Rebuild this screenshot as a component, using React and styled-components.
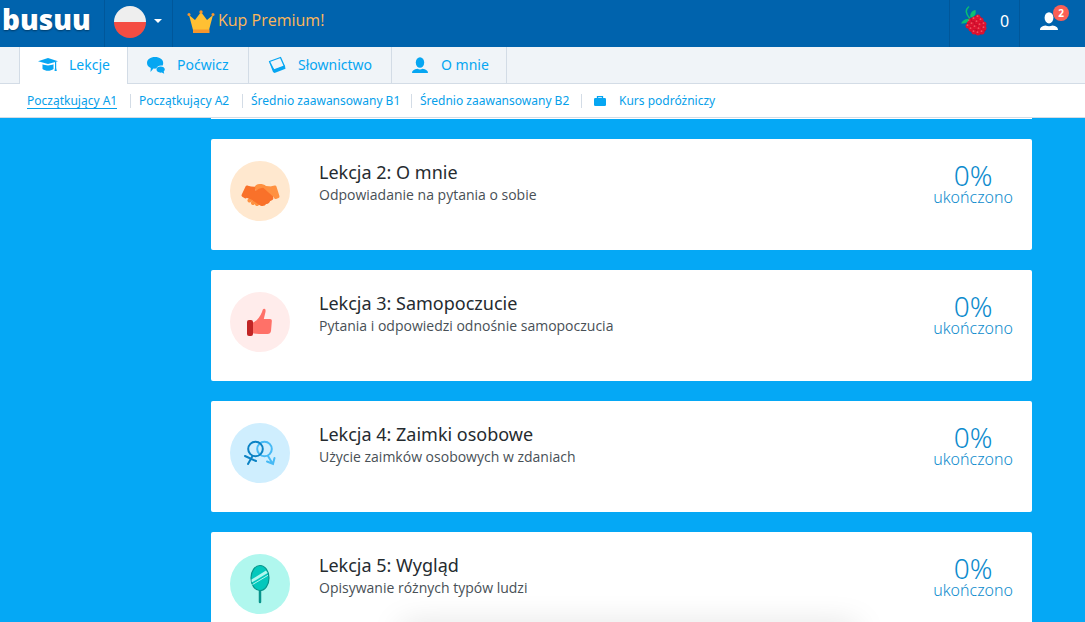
import React from 'react';
import styled, { createGlobalStyle } from 'styled-components';

const tabs = [
  { name: 'Lekcje', icon: CapIcon, active: true, width: 109 },
  { name: 'Poćwicz', icon: ChatIcon, width: 121 },
  { name: 'Słownictwo', icon: CardsIcon, width: 143 },
  { name: 'O mnie', icon: PersonIcon, width: 115 },
];

const levels = [
  { name: 'Początkujący A1', active: true, width: 104 },
  { name: 'Początkujący A2', width: 112 },
  { name: 'Średnio zaawansowany B1', width: 169 },
  { name: 'Średnio zaawansowany B2', width: 170 },
];

const lessons = [
  { title: 'Lekcja 2: O mnie', text: 'Odpowiadanie na pytania o sobie', icon: HandshakeIcon, color: '#ffe8cf' },
  { title: 'Lekcja 3: Samopoczucie', text: 'Pytania i odpowiedzi odnośnie samopoczucia', icon: ThumbIcon, color: '#ffeceb' },
  { title: 'Lekcja 4: Zaimki osobowe', text: 'Użycie zaimków osobowych w zdaniach', icon: GenderIcon, color: '#cfeefe' },
  { title: 'Lekcja 5: Wygląd', text: 'Opisywanie różnych typów ludzi', icon: MirrorIcon, color: '#b0f7ee' },
];

const App = () => {
  return (
    <Page>
      <GlobalStyle />
      <Header>
        <Logo href="#">busuu</Logo>
        <LanguageButton type="button" aria-label="Polski">
          <FlagIcon />
          <Caret />
        </LanguageButton>
        <PremiumLink href="#premium">
          <CrownIcon />
          Kup Premium!
        </PremiumLink>
        <Berries type="button">
          <BerryIcon />
          0
        </Berries>
        <Account type="button" aria-label="Konto">
          <UserIcon />
          <Badge>2</Badge>
        </Account>
      </Header>
      <Tabs>
        {tabs.map(({ name, icon: Icon, active, width }) => (
          <Tab key={name} href="#" $active={active} $width={width}>
            <Icon />
            {name}
          </Tab>
        ))}
      </Tabs>
      <Levels>
        {levels.map(({ name, active, width }) => (
          <Level key={name} $width={width}>
            <LevelLink href="#" $active={active}>{name}</LevelLink>
          </Level>
        ))}
        <Travel>
          <BagIcon />
          <LevelLink href="#">Kurs podróżniczy</LevelLink>
        </Travel>
      </Levels>
      <Lessons>
        <CardEnd />
        {lessons.map(({ title, text, icon: Icon, color }) => (
          <Card key={title}>
            <Round $color={color}>
              <Icon />
            </Round>
            <Info>
              <Title>{title}</Title>
              <Text>{text}</Text>
            </Info>
            <Progress>
              <Percent>0%</Percent>
              <Done>ukończono</Done>
            </Progress>
          </Card>
        ))}
      </Lessons>
      <BottomShade />
    </Page>
  )
}

export default App;

function FlagIcon() {
  return (
    <svg width="32" height="32" viewBox="0 0 32 32">
      <path d="M0 16a16 16 0 0 1 32 0z" fill="#eeeeee" />
      <path d="M0 16a16 16 0 0 0 32 0z" fill="#f44d43" />
    </svg>
  )
}

function CrownIcon() {
  return (
    <svg width="28" height="24" viewBox="0 0 28 24">
      <path d="M2 5l6 5 6-8 6 8 6-5-4 15H6z" fill="#ffc033" />
      <path d="M6 19.500h16.500V23H6z" fill="#f8962c" />
      <circle cx="14" cy="2" r="1.700" fill="#f8962c" />
      <circle cx="2" cy="4.500" r="1.500" fill="#f8962c" />
      <circle cx="26" cy="4.500" r="1.500" fill="#f8962c" />
    </svg>
  )
}

function BerryIcon() {
  const drupes = [
    [17, 11], [13, 13], [20, 14], [8, 15], [16, 16], [23, 18], [11, 18], [19, 19],
    [7, 20], [14, 21], [23, 22], [10, 23], [18, 23], [13, 26], [21, 26], [17, 27],
  ];
  return (
    <svg width="26" height="30" viewBox="0 0 26 30">
      <path d="M8 13l8-4 5 3 3 6 1 6-3 4-6 1-6-3-4-5v-5z" fill="#b50d2c" />
      {drupes.map(([x, y]) => (
        <g key={`${x}-${y}`}>
          <circle cx={x} cy={y} r="2.500" fill="#dc1230" />
          <circle cx={x - 0.5} cy={y - 0.8} r="0.900" fill="#ee5260" />
        </g>
      ))}
      <path d="M7.500 1C4 4 5 8 8.500 12" fill="none" stroke="#0bbf72" strokeWidth="1.500" strokeLinecap="round" />
      <path d="M9.500 11.500c-1-4 1.500-7 5-7.500 1 4-1 7-5 7.500z" fill="#0bbf72" />
      <path d="M8 13c-4-.5-6 1-8 4.500 4 .5 7-.5 8-4.500z" fill="#0bbf72" />
    </svg>
  )
}

function UserIcon() {
  return (
    <svg width="18" height="18" viewBox="0 0 18 18" fill="#fff">
      <ellipse cx="9" cy="5.800" rx="4.400" ry="5.600" />
      <path d="M0 18c0-3 2-4 5.500-4.600 2.200 1 4.800 1 7 0C16 14 18 15 18 18z" />
    </svg>
  )
}

function CapIcon() {
  return (
    <svg width="20" height="14" viewBox="0 0 20 14" fill="#06a6f2">
      <path d="M0 3.200L10 0l10 3.200L10 6z" />
      <path d="M4.500 6.300c3 1.500 8 1.500 11 0v4.700c-3 2.400-8 2.400-11 0z" />
      <path d="M17 4h1.200v6l.6 3h-2.300l.5-3z" />
    </svg>
  )
}

function ChatIcon() {
  return (
    <svg width="18" height="18" viewBox="0 0 18 18" fill="#06a6f2">
      <path d="M8 1c4.600 0 8.200 2.500 8.200 6 0 1-.2 1.900-.8 2.700-2.800-.6-5.400.7-6 2.900-1 .2-2 .2-3 0L3.500 16l.3-4C1.300 11 0 9 0 7c0-3.500 3.400-6 8-6z" />
      <path d="M13.500 10.600c2.500 0 4.300 1.200 4.300 3 0 .8-.4 1.500-1.100 2l.5 2.100-2.400-1.100c-3 .4-5.300-.9-5.300-3 0-1.800 1.700-3 4-3z" />
    </svg>
  )
}

function CardsIcon() {
  return (
    <svg width="18" height="18" viewBox="0 0 18 18">
      <path d="M1.500 5.500L12.500 1.500l4 9-10.500 4z" fill="none" stroke="#06a6f2" strokeWidth="1.300" strokeLinejoin="round" />
      <path d="M1 5.500l5 7.700 10.800-4 .7 3.600-11 4.200-1.500-1z" fill="#06a6f2" />
    </svg>
  )
}

function PersonIcon() {
  return (
    <svg width="18" height="16" viewBox="0 0 18 16" fill="#06a6f2">
      <ellipse cx="9" cy="5.500" rx="4.200" ry="5.300" />
      <path d="M1 16c0-2.500 2-3.600 5.500-4.200 1.600.8 3.400.8 5 0C15 12.400 17 13.500 17 16z" />
    </svg>
  )
}

function BagIcon() {
  return (
    <svg width="12" height="10" viewBox="0 0 12 10">
      <rect y="2" width="12" height="8" rx="1.300" fill="#06a6f2" />
      <path d="M3.500 2.500V.7h5v1.800" fill="none" stroke="#06a6f2" strokeWidth="1.300" />
    </svg>
  )
}

function HandshakeIcon() {
  return (
    <svg width="60" height="60" viewBox="0 0 60 60">
      <path d="M24 27c1-2.500 3-4 5.500-4 3 0 5 .5 6.500 2l6 .5 4 9-6 3-14-8z" fill="#ff9141" />
      <path d="M42.500 26.500l2.500-.5 3 9.500-2.500 1z" fill="#ff9141" stroke="#ff9141" strokeWidth="3" strokeLinejoin="round" />
      <g stroke="#ff9141" strokeWidth="4" strokeLinecap="round">
        <path d="M19.500 39.500l2-2M23 42l2-2M27 43l2-2" />
      </g>
      <path d="M18 26l6.500.5 0 3c1 1 3 .5 4.500-1l4-1 9.500 8.500c.5 2-.5 3-3 3.500-.5 2-2 3-3.500 2.500-1 1.500-3 2.500-5 2l-4-2.500-6-4-3-1-3-1.500z" fill="#f9712a" stroke="#f9712a" strokeWidth="1.500" strokeLinejoin="round" />
      <path d="M17 26l2.500 1-4 9-2.500-1.500z" fill="#f9712a" stroke="#f9712a" strokeWidth="3" strokeLinejoin="round" />
    </svg>
  )
}

function ThumbIcon() {
  return (
    <svg width="60" height="60" viewBox="0 0 60 60">
      <path d="M22 31c5-2 8-6 10-11 .8-2.500 1-3.300 2.300-3.200 1.500.1 1.500 2 1 4L33.800 27H40c1.500 0 2 1 1.800 2.500L41 39c-.3 2-1.500 3-3.500 3H29c-3 0-5-.3-7-1z" fill="#ff7168" />
      <rect x="17" y="28" width="6" height="16" rx="2" fill="#c12525" />
    </svg>
  )
}

function GenderIcon() {
  return (
    <svg width="60" height="60" viewBox="0 0 60 60" fill="none" strokeWidth="2" strokeLinecap="round">
      <g stroke="#47baf5">
        <circle cx="34.500" cy="26" r="7.300" />
        <path d="M38 33l4.500 7.500M37 38.500l6 2.500 1.500-6" />
      </g>
      <g stroke="#0b82c4">
        <circle cx="25.500" cy="26" r="7.300" />
        <path d="M22.500 33L18 41M15 33l11 5" />
      </g>
    </svg>
  )
}

function MirrorIcon() {
  return (
    <svg width="60" height="60" viewBox="0 0 60 60">
      <path d="M30 36v12" stroke="#08948b" strokeWidth="2.500" strokeLinecap="round" />
      <ellipse cx="30" cy="24" rx="9" ry="12.500" fill="#04c8bc" stroke="#08948b" strokeWidth="1.200" />
      <path d="M21.500 25.500l14.500-9 1.700 2.500-16 9.500z" fill="#b0f7ee" />
      <path d="M22.500 30.500L38 21.300" stroke="#b0f7ee" strokeWidth="1" />
    </svg>
  )
}

const GlobalStyle = createGlobalStyle`
  * {
    box-sizing: border-box;
  }

  body {
    margin: 0;
    font-family: 'Noto Sans', sans-serif;
    background-color: #05a8f5;
  }

  a {
    text-decoration: none;
  }

  button {
    border: 0;
    padding: 0;
    background: none;
    font: inherit;
    cursor: pointer;
  }

  svg {
    flex-shrink: 0;
  }
`;
const Page = styled.div`
  height: 100vh;
  display: flex;
  flex-direction: column;
  overflow: hidden;
`;
const Header = styled.header`
  display: flex;
  flex-shrink: 0;
  height: 47px;
  background-color: #0063ad;
  color: white;
`;
const Logo = styled.a`
  width: 104px;
  padding-left: 2px;
  font-family: 'Open Sans', sans-serif;
  font-size: 28px;
  font-weight: 800;
  line-height: 38px;
  color: white;
  text-shadow: 0 1px 2px rgba(0, 0, 0, 0.4);
`;
const LanguageButton = styled.button`
  display: flex;
  align-items: center;
  gap: 8px;
  width: 69px;
  padding: 0 9px 3px;
  border-left: 1px solid #00579a;
  border-right: 1px solid #00579a;
`;
const Caret = styled.span`
  margin-bottom: 3px;
  border: 4px solid transparent;
  border-top-color: white;
  border-bottom: 0;
`;
const PremiumLink = styled.a`
  display: flex;
  align-items: center;
  gap: 3px;
  padding: 0 0 7px 14px;
  margin-right: auto;
  font-family: 'Open Sans', sans-serif;
  font-size: 16px;
  color: #fdb75a;

  svg {
    margin-top: 4px;
  }
`;
const Berries = styled.button`
  display: flex;
  align-items: center;
  gap: 13px;
  width: 70px;
  padding: 0 0 5px 11px;
  border-left: 1px solid #00579a;
  font-size: 16px;
  color: white;
`;
const Account = styled.button`
  position: relative;
  width: 66px;
  padding: 0 0 0 20px;
  border-left: 1px solid #00579a;
  text-align: left;
`;
const Badge = styled.span`
  position: absolute;
  top: 5px;
  left: 33px;
  width: 16px;
  height: 16px;
  border-radius: 50%;
  background-color: #fa5f55;
  font-size: 10px;
  font-weight: 700;
  line-height: 16px;
  text-align: center;
  color: white;
`;
const Tabs = styled.nav`
  display: flex;
  flex-shrink: 0;
  height: 37px;
  padding-left: 19px;
  background-color: #f0f4f8;
  box-shadow: inset 0 -1px #d3dce6;
`;
const Tab = styled.a`
  display: flex;
  align-items: center;
  gap: 11px;
  min-width: ${props => props.$width}px;
  padding: 0 0 2px 18px;
  border-right: 1px solid #d3dce6;
  font-size: 14px;
  color: #06a6f2;
  background-color: ${props => props.$active ? 'white' : 'transparent'};

  &:first-child {
    border-left: 1px solid #d3dce6;
  }

  svg {
    width: 20px;
  }
`;
const Levels = styled.nav`
  display: flex;
  align-items: center;
  flex-shrink: 0;
  height: 34px;
  padding-left: 27px;
  background-color: white;
  border-bottom: 1px solid #d3dce6;
`;
const Level = styled.div`
  display: flex;
  min-width: ${props => props.$width}px;
  border-right: 1px solid #d3dce6;

  & + & {
    padding-left: 8px;
  }
`;
const LevelLink = styled.a`
  font-size: 12px;
  line-height: 14px;
  color: #06a0ea;
  box-shadow: ${props => props.$active ? '0 1px #06a0ea' : 'none'};
`;
const Travel = styled.div`
  display: flex;
  align-items: center;
  gap: 13px;
  padding-left: 12px;
`;
const Lessons = styled.main`
  display: flex;
  flex-direction: column;
  gap: 20px;
  padding: 0 53px 20px 211px;
`;
const CardEnd = styled.div`
  height: 1px;
  flex-shrink: 0;
  background-color: white;
`;
const Card = styled.article`
  display: flex;
  flex-shrink: 0;
  min-height: 111px;
  padding: 22px 19px;
  border-radius: 2px;
  background-color: white;
`;
const Round = styled.div`
  width: 60px;
  height: 60px;
  border-radius: 50%;
  background-color: ${props => props.$color};
`;
const Info = styled.div`
  flex: 1;
  padding-left: 29px;
`;
const Title = styled.h2`
  margin: 0;
  font-size: 18px;
  font-weight: 400;
  line-height: 23px;
  color: #252b2f;
`;
const Text = styled.p`
  margin: 0;
  font-family: 'Open Sans', sans-serif;
  font-size: 14px;
  line-height: 21px;
  color: #485056;
`;
const Progress = styled.div`
  text-align: center;
  font-weight: 300;
  color: #0d8bcd;
`;
const Percent = styled.div`
  font-size: 28px;
  line-height: 28px;
`;
const Done = styled.div`
  font-size: 16px;
  line-height: 16px;
`;
const BottomShade = styled.div`
  position: fixed;
  left: 37%;
  right: 21%;
  bottom: -24px;
  height: 20px;
  box-shadow: 0 0 32px rgba(0, 0, 0, 0.15);
`;
